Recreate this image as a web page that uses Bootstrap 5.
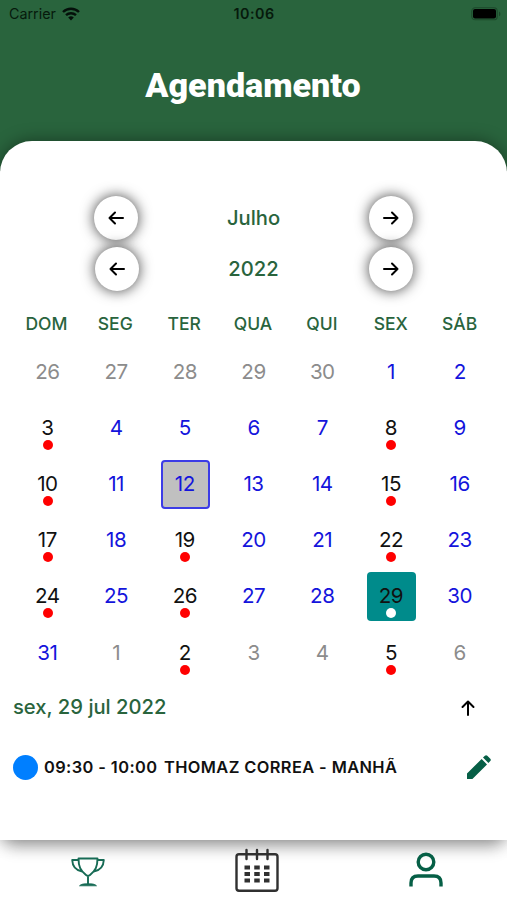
<!DOCTYPE html>
<html lang="pt-BR">
<head>
<meta charset="utf-8">
<meta name="viewport" content="width=device-width, initial-scale=1">
<title>Agendamento</title>
<link href="https://cdn.jsdelivr.net/npm/bootstrap@5.3.0/dist/css/bootstrap.min.css" rel="stylesheet">
<style>
body{font-family:Inter,"Liberation Sans",sans-serif;background:#fff}
svg{display:block;flex:none}
.app{height:900px;overflow:hidden}
.app-head{background:#29643d;height:171px;flex:none}
.status{height:28px;padding:0 6px 0 9px;font-size:14.3px;color:#061a0c}
.status>div{flex:1 1 0}
.wifi{margin-left:6px}
.clock{letter-spacing:.5px;padding-right:2px}
.app-title{font-family:Roboto,sans-serif;font-weight:900;font-size:34.1px;line-height:42px;margin-top:36px;padding-right:1px;color:#fff}
.panel{height:699px;margin-top:-30px;border-radius:32px 32px 0 0;background:#fff;padding:51px 13px 0;box-shadow:0 0 17px rgba(0,0,0,.42),0 16px 16px -8px rgba(0,0,0,.2);flex:none;position:relative}
.picker{height:51.4px;font-size:20.2px;font-weight:550;color:#29643d}
.picker span{padding-top:1px}
.picker .arrow{width:44px;height:44px;background:#fff;border:0;box-shadow:0 0 14px rgba(0,0,0,.75)}
.picker .side{width:206px;flex:none}
.nudge{padding-left:2px}
.green{color:#29643d}
.weekdays{height:49.2px;font-size:17.5px;font-weight:550;line-height:22px;padding-top:18.5px;margin-left:-1px}
.week{height:56.2px}
.day{width:49px;height:49px;border-radius:4px;font-size:20.6px;letter-spacing:-.5px;padding-right:1px;color:#1414dc;position:relative;left:.5px}
.day.off{color:#8c8c8c}
.day.ev{color:#111}
.day.ev::after{content:"";position:absolute;width:10px;height:10px;border-radius:50%;background:#f00;left:19.5px;bottom:3px}
.day.now{background:#c0c0c0;border:2px solid #3c3ce6}
.day.sel{background:#008b8b}
.day.sel.ev::after{background:#fff}
.picked{height:52px;font-size:20.2px;font-weight:550;padding-top:1px}
.up{margin-right:17px}
.event{height:68px;font-size:16.4px;font-weight:600;letter-spacing:.4px;color:#111}
.blue-dot{width:25px;height:25px;background:#007fff;margin-right:6px}
.who{margin-left:6.5px}
.pencil{margin-right:2px}
.tabs{height:60px;margin:0 -3.5px 0 3.5px}
</style>
</head>
<body>
<div class="app d-flex flex-column">
<header class="app-head">
<div class="status d-flex align-items-center">
<div class="d-flex align-items-center"><span>Carrier</span>
<svg width="18" height="14" viewBox="0 0 18 14" class="wifi" fill="none" stroke="#04100a" stroke-width="2.4"><path d="M1 5a11.5 11.5 0 0 1 16 0M4 8.2a7.3 7.3 0 0 1 10 0"/><path d="M6.2 10.6a4 4 0 0 1 5.6 0L9 13.6z" fill="#04100a" stroke="none"/></svg></div>
<div class="clock text-center fw-semibold">10:06</div>
<div class="d-flex justify-content-end"><svg width="30" height="14" viewBox="0 0 30 14"><rect x=".8" y=".8" width="25.4" height="12" rx="3.4" fill="none" stroke="#1c482b" stroke-width="1.1"/><rect x="2" y="2" width="23" height="9.5" rx="2" fill="#000"/><path d="M28 4.6v4.6q1.4-.7 1.4-2.3T28 4.6" fill="#1c482b"/></svg></div>
</div>
<h1 class="app-title text-center mb-0">Agendamento</h1>
</header>
<main class="panel">
<div class="picker d-flex align-items-center justify-content-between">
<div class="side d-flex justify-content-center"><button class="arrow rounded-circle p-0 d-flex align-items-center justify-content-center" aria-label="Mês anterior"><svg width="16" height="14" viewBox="0 0 16 14" fill="none" stroke="#000" stroke-width="2" stroke-linecap="round" stroke-linejoin="round"><path d="M15 7H1.5M7 1.5L1.5 7 7 12.5"/></svg></button></div>
<span>Julho</span>
<div class="side d-flex justify-content-center"><button class="arrow rounded-circle p-0 d-flex align-items-center justify-content-center" aria-label="Próximo mês"><svg width="16" height="14" viewBox="0 0 16 14" fill="none" stroke="#000" stroke-width="2" stroke-linecap="round" stroke-linejoin="round"><path d="M1 7h13.5M9 1.5L14.5 7 9 12.5"/></svg></button></div>
</div>
<div class="picker d-flex align-items-center justify-content-between">
<div class="side nudge d-flex justify-content-center"><button class="arrow rounded-circle p-0 d-flex align-items-center justify-content-center" aria-label="Ano anterior"><svg width="16" height="14" viewBox="0 0 16 14" fill="none" stroke="#000" stroke-width="2" stroke-linecap="round" stroke-linejoin="round"><path d="M15 7H1.5M7 1.5L1.5 7 7 12.5"/></svg></button></div>
<span>2022</span>
<div class="side d-flex justify-content-center"><button class="arrow rounded-circle p-0 d-flex align-items-center justify-content-center" aria-label="Próximo ano"><svg width="16" height="14" viewBox="0 0 16 14" fill="none" stroke="#000" stroke-width="2" stroke-linecap="round" stroke-linejoin="round"><path d="M1 7h13.5M9 1.5L14.5 7 9 12.5"/></svg></button></div>
</div>
<div class="weekdays row g-0 text-center green"><div class="col">DOM</div><div class="col">SEG</div><div class="col">TER</div><div class="col">QUA</div><div class="col">QUI</div><div class="col">SEX</div><div class="col">SÁB</div></div>
<div id="weeks"></div>
<div class="picked d-flex align-items-center justify-content-between green"><span>sex, 29 jul 2022</span>
<svg class="up" width="18" height="16" viewBox="0 0 14 16" fill="none" stroke="#000" stroke-width="2" stroke-linecap="round" stroke-linejoin="round"><path d="M7 15V1.5M1.5 7L7 1.5 12.5 7"/></svg></div>
<div class="event d-flex align-items-center"><span class="blue-dot rounded-circle"></span><span>09:30 - 10:00</span><span class="who">THOMAZ CORREA - MANHÃ</span>
<svg class="pencil ms-auto" width="26" height="26" viewBox="0 0 26 26" fill="#065f46"><path d="M1 19.600L15.600 5l5.400 5.400L6.400 25H1zM17 3.600l1.900-1.900q1.200-1 2.400 0l3 3q1 1.200 0 2.400l-1.900 1.900z"/></svg></div>
</main>
<nav class="tabs row g-0 align-items-center position-relative">
<div class="col d-flex justify-content-center pt-1"><svg width="34" height="30" viewBox="0 0 34 30" fill="none" stroke="#176b55" stroke-width="1.9" stroke-linejoin="round"><path d="M7.500 1.500h19c0 8-2 12-7.500 16.500-1.300 1.100-2.700 1.100-4 0C9.500 13.500 7.500 9.500 7.500 1.500zM7.500 3H1.200c.3 6.500 4 10.500 10 11.500M26.500 3h6.300c-.3 6.500-4 10.500-10 11.500M17 19v8"/><path d="M8.500 28.800h17c-1.500-1.700-4-2-8.500-2s-7 .3-8.500 2z" fill="#176b55" stroke-width=".8"/></svg></div>
<div class="col d-flex justify-content-center pt-1"><svg class="mb-1" width="44" height="44" viewBox="0 0 44 44" fill="none" stroke="#303030" stroke-width="2.400"><rect x="1.500" y="6.200" width="41" height="36.500" rx="2.500"/><path d="M11.500 2v9M22 2v9M32.500 2v9" stroke-linecap="round"/><path d="M9.500 19.500h25M9.500 26h25M9.500 32.500h25" stroke-width="3.800" stroke-dasharray="5.500 4.250"/></svg></div>
<div class="col d-flex justify-content-center"><svg width="34" height="36" viewBox="0 0 34 36" fill="none" stroke="#065f46" stroke-width="3.400"><circle cx="17" cy="10" r="7.800"/><path d="M2 34.500v-3.500q0-7 7-7h16q7 0 7 7v3.500"/></svg></div>
</nav>
</div>
<script>
const weeks = [
  ['26o','27o','28o','29o','30o','1','2'],
  ['3e','4','5','6','7','8e','9'],
  ['10e','11','12n','13','14','15e','16'],
  ['17e','18','19e','20','21','22e','23'],
  ['24e','25','26e','27','28','29es','30'],
  ['31','1o','2e','3o','4o','5e','6o']
];
const names = {o:'off', e:'ev', n:'now', s:'sel'};
document.getElementById('weeks').innerHTML = weeks.map(w =>
  '<div class="week row g-0 align-items-center">' + w.map(d => {
    const cls = d.replace(/\d/g,'').split('').map(c => names[c]).join(' ');
    return `<div class="col d-flex justify-content-center"><div class="day d-flex align-items-center justify-content-center ${cls}">${parseInt(d)}</div></div>`;
  }).join('') + '</div>').join('');
</script>
<script src="https://cdn.jsdelivr.net/npm/bootstrap@5.3.0/dist/js/bootstrap.bundle.min.js"></script>
</body>
</html>
